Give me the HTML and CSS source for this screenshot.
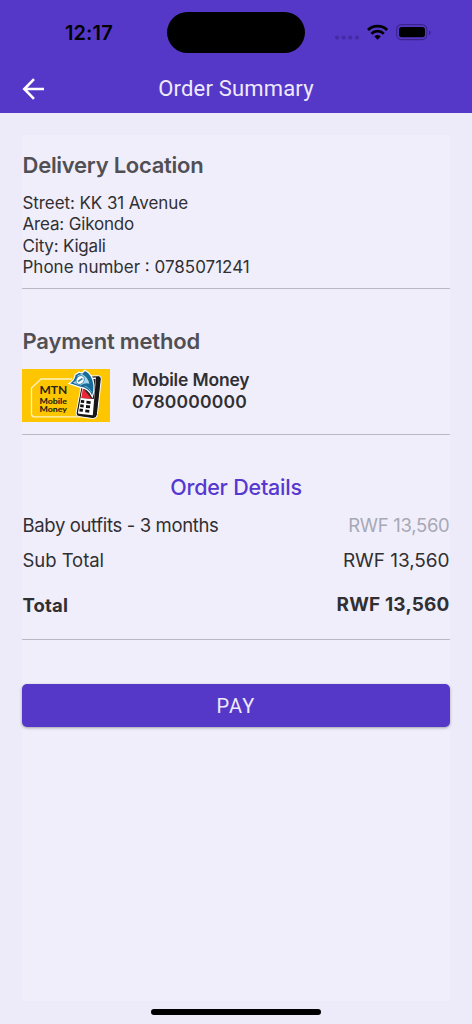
FILE: index.html
```html
<!DOCTYPE html>
<html lang="en">
<head>
<meta charset="utf-8">
<title>Order Summary</title>
<link rel="stylesheet" href="styles.css">
</head>
<body>
<div class="screen">
  <header class="header">
    <div class="status">
      <span class="time">12:17</span>
      <span class="island"></span>
      <svg class="indicators" width="98" height="20" viewBox="0 0 98 20">
        <g fill="#462ca3"><circle cx="3" cy="14.6" r="2.1"/><circle cx="9.7" cy="14.6" r="2.1"/><circle cx="16.3" cy="14.6" r="2.1"/><circle cx="23" cy="14.6" r="2.1"/></g>
        <g fill="none" stroke="#000" stroke-width="2.8"><path d="M34 7a14 14 0 0 1 19.2 0"/><path d="M37.4 10.7a9 9 0 0 1 12.4 0"/></g>
        <path d="M40.4 13.5a4.8 4.8 0 0 1 6.4 0l-3.2 3.2z"/>
        <rect x="62.6" y="1.6" width="30.2" height="15" rx="4.8" fill="none" stroke="#3a2488" stroke-width="1.1"/>
        <rect x="65" y="4.1" width="26" height="10.2" rx="2.8"/>
        <path d="M95 7.2v5q1.6-.7 1.6-2.5T95 7.2z" fill="#3a2488"/>
      </svg>
    </div>
    <div class="navbar">
      <svg class="back" width="24" height="24" viewBox="0 0 24 24" fill="none" stroke="#fff" stroke-width="2.6"><path d="M22 12H2.5M12 2.2L2.3 12l9.7 9.8"/></svg>
      <h1 class="title">Order Summary</h1>
    </div>
  </header>
  <main class="panel">
    <section class="section delivery">
      <h2 class="heading heading-delivery">Delivery Location</h2>
      <p class="address"><span class="street">Street: KK 31 Avenue</span><br><span class="area">Area: Gikondo</span><br><span class="city">City: Kigali</span><br><span class="phone">Phone number : 0785071241</span></p>
    </section>
    <section class="section payment">
      <h2 class="heading heading-payment">Payment method</h2>
      <div class="method">
        <svg class="logo" width="88" height="53" viewBox="0 0 88 53">
          <path fill="#fdc600" d="M0 0h88v53H0z"/>
          <path d="M50 10H19L9.5 19v26q0 2.8 2.8 2.8H58" fill="none" stroke="#fff4c2" stroke-width="1.3"/>
          <text class="logo-mtn" x="17.5" y="25.4" textLength="27.8" lengthAdjust="spacingAndGlyphs">MTN</text>
          <text class="logo-sub" x="17.5" y="34.8" textLength="27.5" lengthAdjust="spacingAndGlyphs">Mobile</text>
          <text class="logo-sub" x="17.5" y="43.2" textLength="27.5" lengthAdjust="spacingAndGlyphs">Money</text>
          <path d="M61 7.3l15.5-.6q3 .2 2.8 3.4l-3.9 35.5q-.7 4-4.5 4L57 47.6q-3.2-.4-2.9-3.6z" fill="#171717" stroke="#fff" stroke-width="1"/>
          <path d="M62 9l12-.5-3.2 37.7-13.8-1.4q-1.1-.2-1-1.4z" fill="#fff"/>
          <path d="M64 10.2l9.6-.2-1.7 20-12.5-1z" fill="#292929"/>
          <path d="M60.8 19l8.8 10.8-10.2-.7z" fill="#e92736"/>
          <g stroke="#111" stroke-width="2.8"><path d="M58.8 32.4l3.4.3M64.4 33.2l4.2.4M58.2 36.7l3.5.4M64 37.5l4 .4M57.5 41l3.4.4M63.3 41.9l4 .4"/></g>
          <path d="M47 14.5Q52.8 11 53 5.8L57 3.2 60 4l3-2.8q8 4 9 15 .6 6-1.7 11.5Q66.8 19 57.7 18.1z" fill="#176b99" stroke="#fff" stroke-width="1.2"/>
          <path d="M51 13.8q4.7-2.7 4.8-7.5l4.3-1.3q6 3.4 7.2 9.7-4-1.2-9 1.7z" fill="#a9d8e8"/>
          <ellipse cx="58.2" cy="11" rx="3.8" ry="4.7" transform="rotate(35 58.2 11)" fill="#fff" stroke="#176b99" stroke-width=".7"/>
          <path d="M56 12.5l4.5-3" stroke="#4186a6" stroke-width="1.6"/>
          <path d="M62.5 17q4 .8 7 6" fill="none" stroke="#6eb4d0"/>
        </svg>
        <p class="account"><span class="account-name">Mobile Money</span><br><span class="account-number">0780000000</span></p>
      </div>
    </section>
    <section class="section details">
      <h2 class="details-heading">Order Details</h2>
      <div class="row item"><span class="item-name">Baby outfits - 3 months</span><span class="price muted">RWF 13,560</span></div>
      <div class="row subtotal"><span class="subtotal-name">Sub Total</span><span class="price subtotal-price">RWF 13,560</span></div>
      <div class="row total"><span class="total-name">Total</span><span class="total-price">RWF 13,560</span></div>
    </section>
    <button class="pay">PAY</button>
  </main>
  <div class="home"></div>
</div>
</body>
</html>
```
FILE: styles.css
```css
* { box-sizing: border-box; }
body { margin: 0; font-family: Inter, "Liberation Sans", sans-serif; color: #303033; background: #edebf9; }
h1, h2, p { margin: 0; }
.screen { width: 472px; height: 1024px; overflow: hidden; display: flex; flex-direction: column; background: #edebf9; }
.header { flex: none; height: 113px; background: #5638c9; }
.status { display: grid; grid-template-columns: 167px 138px 1fr; height: 65px; align-items: center; }
.time { padding-left: 65px; font-size: 20px; font-weight: 600; letter-spacing: .1px; color: #000; }
.island { height: 41px; border-radius: 21px; background: #000; }
.indicators { margin: 0 0 0 29px; }
.navbar { display: grid; grid-template-columns: 1fr auto 1fr; align-items: center; height: 48px; padding: 0 22px; }
.back { display: block; }
.title { font-family: Roboto, sans-serif; font-weight: 400; font-size: 22px; letter-spacing: .18px; line-height: 28px; margin-top: -1px; color: #eeeafb; }
.panel { margin: 22px 22px 0; flex: none; height: 866px; background: #f0eefb; }
.section { border-bottom: 1px solid #bab8c5; }
.delivery { height: 154px; padding-top: 16px; }
.heading { font-size: 22px; line-height: 28px; font-weight: 600; color: #505054; padding-left: .5px; }
.heading-delivery { letter-spacing: -.26px; }
.heading-payment { letter-spacing: -.18px; }
.address { margin-top: 14px; font-size: 17px; line-height: 21.25px; padding-left: .5px; }
.street { letter-spacing: -.08px; }
.area { letter-spacing: -.16px; }
.city { letter-spacing: -.2px; }
.payment { height: 146px; padding-top: 38px; }
.method { display: flex; gap: 22px; margin-top: 14px; }
.logo { display: block; }
.logo-mtn, .logo-sub { font-family: Lato, sans-serif; font-weight: 700; fill: #292511; }
.logo-mtn { font-size: 11.8px; }
.logo-sub { font-size: 7.8px; font-weight: 900; }
.account { font-size: 17.5px; line-height: 22px; font-weight: 600; }
.account-name { letter-spacing: -.17px; }
.account-number { letter-spacing: .18px; }
.details { height: 205px; padding-top: 38px; }
.details-heading { text-align: center; font-size: 21.5px; line-height: 28px; font-weight: 500; letter-spacing: -.23px; color: #5638d0; }
.row { display: flex; justify-content: space-between; align-items: center; height: 24px; font-size: 18.5px; line-height: 24px; padding: 0 .5px; }
.item { margin-top: 12px; }
.item-name { letter-spacing: -.36px; }
.subtotal-name { letter-spacing: -.05px; }
.muted { color: #a8a8b5; letter-spacing: -.3px; }
.subtotal { margin-top: 11px; }
.subtotal-price { font-size: 19px; letter-spacing: -.05px; line-height: 25px; }
.total { margin-top: 21px; font-weight: 700; }
.total-name { letter-spacing: .15px; }
.total-price { font-size: 19px; letter-spacing: .15px; line-height: 26px; }
.pay { display: block; width: 100%; height: 43px; margin-top: 44px; padding: 0; border: 0; border-radius: 5px; background: #5638c9; color: #eeeafb; font-family: Roboto, sans-serif; font-size: 20px; letter-spacing: 1.2px; box-shadow: 0 1px 3px #0005; }
.home { width: 170px; height: 6px; margin: 8px auto 0; border-radius: 3px; background: #000; }
```
